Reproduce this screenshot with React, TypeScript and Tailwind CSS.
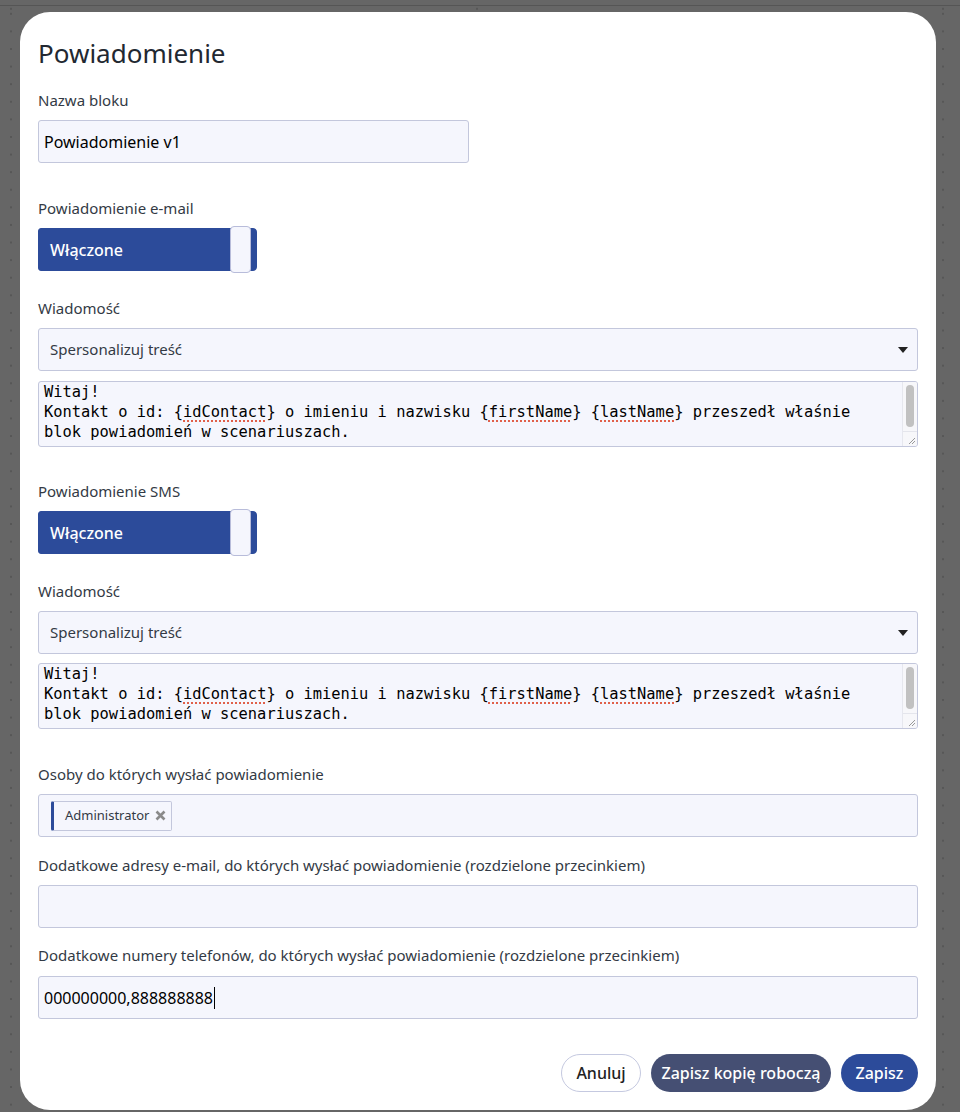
import type { ReactNode } from 'react'

const font = { fontFamily: '"Noto Sans", "Open Sans", sans-serif' }

function Label({ children, className = '' }: { children: ReactNode; className?: string }) {
  return (
    <p className={`text-[15px] leading-5 text-[#333a45] ${className}`}>{children}</p>
  )
}

function Toggle() {
  return (
    <div className="relative mt-[10px] flex h-[43px] w-[219px] items-center rounded-[3px] rounded-r-[4px] border border-[#2c4b9a] bg-[#2c4b9a] pl-[11px] text-[16px] font-medium text-white">
      Włączone
      <span className="absolute top-[-3px] left-[191px] h-[47px] w-[21px] rounded-[4px] border border-[#b8bcda] bg-[#f5f6fd]" />
    </div>
  )
}

function Select() {
  return (
    <div className="mt-[10px] flex h-[43px] items-center justify-between rounded-[3px] border border-[#c3c7dc] bg-[#f5f6fd] pr-[9px] pl-[11px] text-[15px] text-[#333a45]">
      <span>Spersonalizuj treść</span>
      <svg width="10" height="6" viewBox="0 0 10 6">
        <path d="M0 0h10L5 6z" fill="#222" />
      </svg>
    </div>
  )
}

function Spell({ children }: { children: ReactNode }) {
  return (
    <span className="underline decoration-[#e0604a] decoration-dotted decoration-[1.5px] underline-offset-[3px]">
      {children}
    </span>
  )
}

function MessageBox({ className = '' }: { className?: string }) {
  return (
    <div
      className={`relative h-[66px] overflow-hidden rounded-[3px] border border-[#c3c7dc] bg-[#f5f6fd] ${className}`}
    >
      <div
        className="pl-[5px] text-[15.4px] leading-[20px] whitespace-pre text-black"
        style={{ fontFamily: '"DejaVu Sans Mono", monospace' }}
      >
        <div>Witaj!</div>
        <div>
          {'Kontakt o id: {'}
          <Spell>idContact</Spell>
          {'} o imieniu i nazwisku {'}
          <Spell>firstName</Spell>
          {'} {'}
          <Spell>lastName</Spell>
          {'} przeszedł właśnie'}
        </div>
        <div>blok powiadomień w scenariuszach.</div>
      </div>
      <div className="absolute top-0 right-0 bottom-0 flex w-[15px] flex-col border-l border-[#e6e7ee] bg-[#f7f7fa]">
        <div className="flex-1 p-[3px]">
          <div className="h-[42px] rounded-full bg-[#c1c1c1]" />
        </div>
        <div className="flex h-[15px] items-end justify-end border-t border-[#e4e5ec] pr-[1px] pb-[1px]">
          <svg width="8" height="8" viewBox="0 0 8 8">
            <path d="M7 1L1 7M7 4L4 7" stroke="#999" strokeWidth="1" />
          </svg>
        </div>
      </div>
    </div>
  )
}

function TextInput({ value, caret, className = '' }: { value?: string; caret?: boolean; className?: string }) {
  return (
    <div
      className={`flex h-[43px] items-center rounded-[3px] border border-[#c3c7dc] bg-[#f5f6fd] pl-[5px] text-[16px] text-black ${className}`}
    >
      {value}
      {caret ? <span className="ml-[1px] h-[22px] w-px bg-black" /> : null}
    </div>
  )
}

export default function App() {
  return (
    <div className="min-h-[1112px] w-full border-t-[5px] border-[#666] bg-[#666]" style={font}>
      <div className="h-[7px] border-t border-[#555] bg-[radial-gradient(circle,#575757_1px,transparent_1.2px)] bg-[length:466px_17.6px] bg-[position:-222px_-6px]" />
      <div className="relative">
        <div className="pointer-events-none absolute inset-0 h-[1100px] bg-[radial-gradient(circle,#575757_1px,transparent_1.2px)] bg-[length:466px_17.6px] bg-[position:-222px_-7px]" />
        <div className="relative ml-[20px] h-[1098px] w-[916px] rounded-[30px] bg-white px-[18px] pt-[25px]">
          <h1 className="text-[26px] leading-[32px] text-[#222831]">Powiadomienie</h1>

          <Label className="mt-[21px]">Nazwa bloku</Label>
          <TextInput value="Powiadomienie v1" className="mt-[10px] w-[431px]" />

          <Label className="mt-[35px]">Powiadomienie e-mail</Label>
          <Toggle />

          <Label className="mt-[27px]">Wiadomość</Label>
          <Select />
          <MessageBox className="mt-[10px]" />

          <Label className="mt-[34px]">Powiadomienie SMS</Label>
          <Toggle />

          <Label className="mt-[27px]">Wiadomość</Label>
          <Select />
          <MessageBox className="mt-[9px]" />

          <Label className="mt-[35px]">Osoby do których wysłać powiadomienie</Label>
          <div className="mt-[10px] flex h-[43px] items-center rounded-[3px] border border-[#c3c7dc] bg-[#f5f6fd] pl-[12px]">
            <span className="flex h-[30px] items-center gap-[6px] rounded-[2px] border border-[#c3c7dc] border-l-[3px] border-l-[#2c4b9a] bg-[#f5f6fd] pr-[5px] pl-[11px] text-[13px] text-[#333a45]">
              Administrator
              <svg width="11" height="11" viewBox="0 0 11 11">
                <path d="M1.5 1.5l8 8M9.5 1.5l-8 8" stroke="#8a8a8a" strokeWidth="2.6" />
              </svg>
            </span>
          </div>

          <Label className="mt-[18px]">
            Dodatkowe adresy e-mail, do których wysłać powiadomienie (rozdzielone przecinkiem)
          </Label>
          <TextInput className="mt-[10px]" />

          <Label className="mt-[17px]">
            Dodatkowe numery telefonów, do których wysłać powiadomienie (rozdzielone przecinkiem)
          </Label>
          <TextInput value="000000000,888888888" caret className="mt-[11px]" />

          <div className="mt-[35px] flex justify-end gap-[10px] text-[16px] font-medium">
            <button className="h-[38px] w-[80px] rounded-full border border-[#c5c9e0] bg-white text-[#222]">
              Anuluj
            </button>
            <button className="h-[38px] w-[180px] rounded-full bg-[#454f73] text-white">
              Zapisz kopię roboczą
            </button>
            <button className="h-[38px] w-[77px] rounded-full bg-[#2c4b9a] text-white">
              Zapisz
            </button>
          </div>
        </div>
      </div>
    </div>
  )
}
